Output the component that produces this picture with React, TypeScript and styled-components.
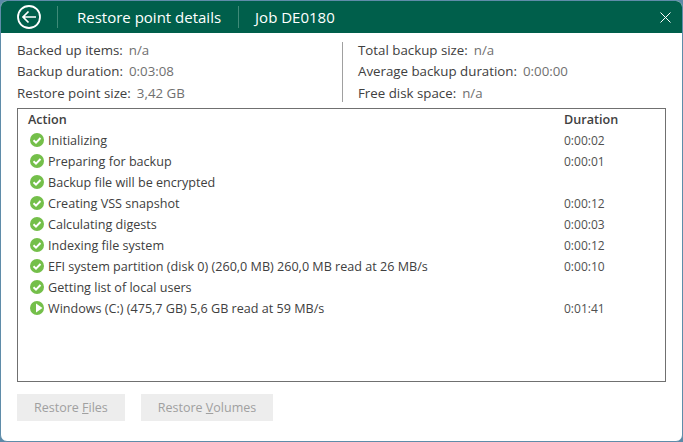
import styled, { createGlobalStyle } from "styled-components";

const GlobalStyle = createGlobalStyle`
  html, body {
    margin: 0;
    padding: 0;
    background: #ffffff;
  }
  * {
    box-sizing: border-box;
  }
`;

const rows = [
  { action: "Initializing", duration: "0:00:02" },
  { action: "Preparing for backup", duration: "0:00:01" },
  { action: "Backup file will be encrypted", duration: "" },
  { action: "Creating VSS snapshot", duration: "0:00:12" },
  { action: "Calculating digests", duration: "0:00:03" },
  { action: "Indexing file system", duration: "0:00:12" },
  { action: "EFI system partition (disk 0) (260,0 MB) 260,0 MB read at 26 MB/s", duration: "0:00:10" },
  { action: "Getting list of local users", duration: "" },
  { action: "Windows (C:) (475,7 GB) 5,6 GB read at 59 MB/s", duration: "0:01:41", running: true },
];

const leftStats = [
  { label: "Backed up items:", value: "n/a" },
  { label: "Backup duration:", value: "0:03:08" },
  { label: "Restore point size:", value: "3,42 GB" },
];

const rightStats = [
  { label: "Total backup size:", value: "n/a" },
  { label: "Average backup duration:", value: "0:00:00" },
  { label: "Free disk space:", value: "n/a" },
];

function BackIcon() {
  return (
    <svg width="24" height="24" viewBox="0 0 24 24" fill="none" stroke="#fff">
      <circle cx="12" cy="12" r="11" strokeWidth="1.8" />
      <path d="M19 12H6M11.5 6.5L6 12l5.5 5.5" strokeWidth="1.7" />
    </svg>
  );
}

function CloseIcon() {
  return (
    <svg width="11" height="11" viewBox="0 0 11 11" fill="none" stroke="#fff" strokeWidth="1">
      <path d="M.5.5l10 10M10.5.5l-10 10" />
    </svg>
  );
}

function OkIcon() {
  return (
    <StatusSvg viewBox="0 0 14 14">
      <circle cx="7" cy="7" r="7" fill="#74bf4a" />
      <path d="M3.5 7.2l2.5 2.4 4.5-4.6" fill="none" stroke="#fff" strokeWidth="2" />
    </StatusSvg>
  );
}

function RunningIcon() {
  return (
    <StatusSvg viewBox="0 0 14 14">
      <circle cx="7" cy="7" r="7" fill="#74bf4a" />
      <path d="M6 2.5L12.5 7 6 11.5z" fill="#fff" />
    </StatusSvg>
  );
}

export default function App() {
  return (
    <>
      <GlobalStyle />
      <Frame>
        <Window>
          <Header>
            <BackButton>
              <BackIcon />
            </BackButton>
            <HeaderTitle>Restore point details</HeaderTitle>
            <HeaderTitle>Job DE0180</HeaderTitle>
            <CloseButton>
              <CloseIcon />
            </CloseButton>
          </Header>
          <Body>
            <Stats>
              <StatColumn>
                {leftStats.map((s) => (
                  <Stat key={s.label}>
                    <StatLabel>{s.label}</StatLabel>
                    <StatValue>{s.value}</StatValue>
                  </Stat>
                ))}
              </StatColumn>
              <StatDivider />
              <StatColumn>
                {rightStats.map((s) => (
                  <Stat key={s.label}>
                    <StatLabel>{s.label}</StatLabel>
                    <StatValue>{s.value}</StatValue>
                  </Stat>
                ))}
              </StatColumn>
            </Stats>
            <LogBox>
              <LogHead>
                <span>Action</span>
                <DurationHead>Duration</DurationHead>
              </LogHead>
              {rows.map((r) => (
                <LogRow key={r.action}>
                  <ActionCell>
                    {r.running ? <RunningIcon /> : <OkIcon />}
                    <span>{r.action}</span>
                  </ActionCell>
                  <DurationCell>{r.duration}</DurationCell>
                </LogRow>
              ))}
            </LogBox>
            <Buttons>
              <DisabledButton disabled>
                Restore <u>F</u>iles
              </DisabledButton>
              <DisabledButton disabled>
                Restore <u>V</u>olumes
              </DisabledButton>
            </Buttons>
          </Body>
        </Window>
      </Frame>
    </>
  );
}

const Frame = styled.div`
  width: 683px;
  height: 442px;
  background: #5c8aa8;
`;

const Window = styled.div`
  width: 683px;
  height: 442px;
  display: flex;
  flex-direction: column;
  border: 1px solid #5f8ca9;
  border-radius: 7px;
  overflow: hidden;
  background: #fff;
  font-family: "Open Sans", "Noto Sans", sans-serif;
`;

const Header = styled.div`
  height: 32px;
  flex: none;
  display: flex;
  align-items: center;
  background: #005f4b;
  color: #fff;
`;

const BackButton = styled.div`
  width: 57px;
  height: 22px;
  padding-left: 16px;
  border-right: 1px solid #3f8a78;
  display: flex;
  align-items: center;
`;

const HeaderTitle = styled.div`
  height: 22px;
  padding: 0 17px 0 19px;
  display: flex;
  align-items: center;
  font-size: 15px;
  & + & {
    border-left: 1px solid #3f8a78;
    padding-left: 16px;
  }
`;

const CloseButton = styled.div`
  margin-left: auto;
  margin-right: 11px;
  display: flex;
`;

const Body = styled.div`
  flex: 1;
  display: flex;
  flex-direction: column;
  padding: 6px 16px 0;
`;

const Stats = styled.div`
  display: flex;
  height: 69px;
`;

const StatColumn = styled.div`
  display: flex;
  flex-direction: column;
  width: 325px;
  & + div + & {
    width: auto;
    padding-left: 15px;
  }
`;

const StatDivider = styled.div`
  width: 1px;
  height: 60px;
  margin-top: 3px;
  background: #a0a0a0;
`;

const Stat = styled.div`
  height: 21.5px;
  display: flex;
  align-items: center;
  gap: 6px;
  font-size: 13.3px;
`;

const StatLabel = styled.span`
  color: #404040;
`;

const StatValue = styled.span`
  color: #707070;
`;

const LogBox = styled.div`
  height: 274px;
  width: 649px;
  border: 1px solid #707070;
  padding: 0 10px;
  font-size: 12.6px;
  color: #404040;
`;

const LogHead = styled.div`
  height: 21px;
  display: flex;
  align-items: center;
  justify-content: space-between;
  font-weight: 600;
`;

const DurationHead = styled.span`
  width: 91px;
`;

const LogRow = styled.div`
  height: 21px;
  display: flex;
  align-items: center;
  justify-content: space-between;
`;

const ActionCell = styled.div`
  display: flex;
  align-items: center;
  gap: 4px;
  padding-left: 2px;
`;

const StatusSvg = styled.svg`
  width: 14px;
  height: 14px;
  margin-top: -2px;
`;

const DurationCell = styled.div`
  width: 91px;
  color: #505050;
  font-size: 12px;
`;

const Buttons = styled.div`
  display: flex;
  gap: 16px;
  margin-top: 12px;
`;

const DisabledButton = styled.button`
  height: 27px;
  padding: 0 17px;
  border: none;
  background: #ededed;
  color: #a0a0a0;
  font-family: inherit;
  font-size: 12.5px;
`;
